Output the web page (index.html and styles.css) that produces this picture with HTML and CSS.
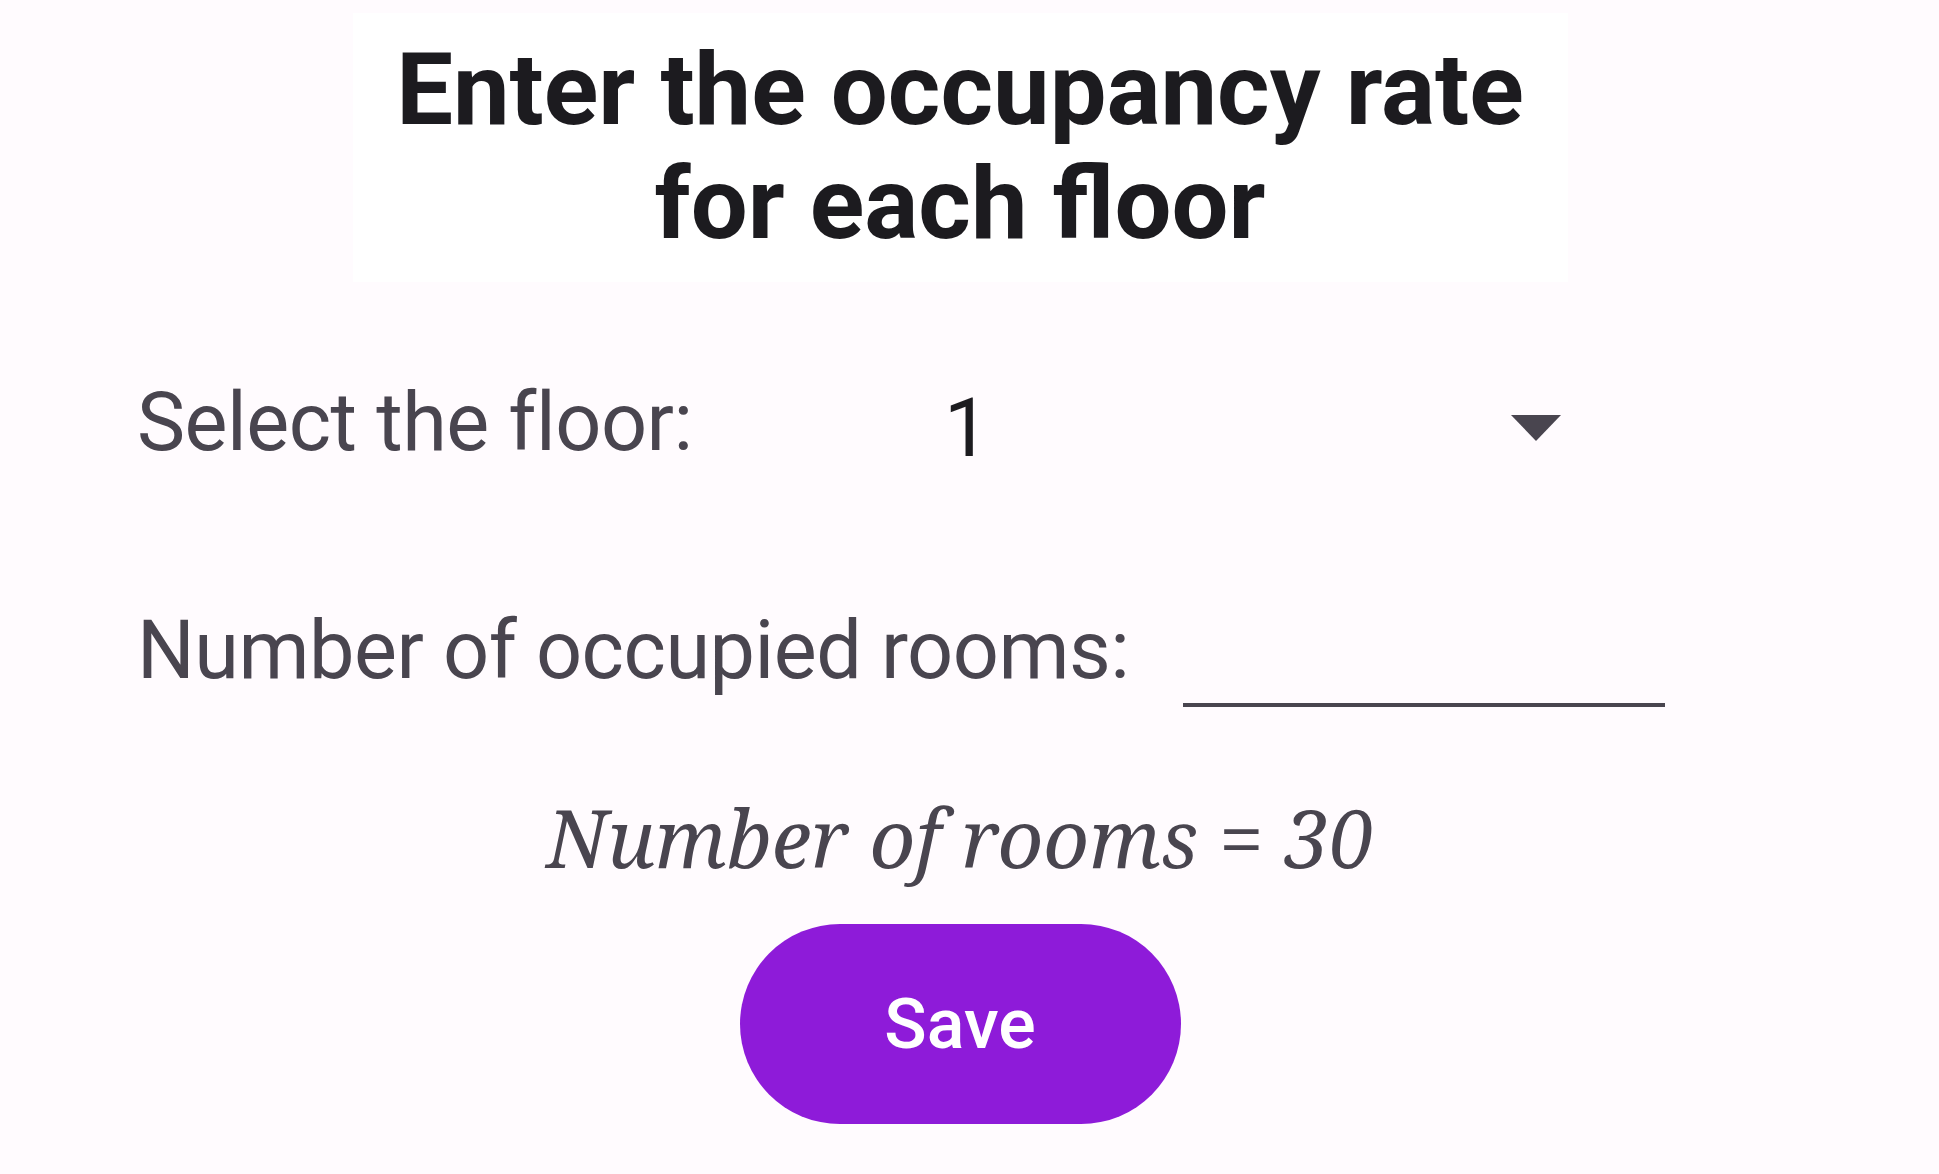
FILE: index.html
```html
<!DOCTYPE html>
<html lang="en">
<head>
<meta charset="utf-8">
<title>Occupancy rate</title>
<link rel="stylesheet" href="styles.css">
</head>
<body>
<main class="screen">
  <header class="title-card">
    <h1 class="title">Enter the occupancy rate<br>for each floor</h1>
  </header>

  <section class="form">
    <div class="row row-floor">
      <span class="label label-floor">Select the floor:</span>
      <div class="spinner">
        <span class="spinner-value">1</span>
        <svg class="spinner-arrow" width="50" height="26" viewBox="0 0 50 26" aria-hidden="true">
          <polygon points="0,0 50,0 25,26" fill="#49454f"/>
        </svg>
      </div>
    </div>

    <div class="row row-rooms">
      <span class="label label-rooms">Number of occupied rooms:</span>
      <div class="edit-field"></div>
    </div>
  </section>

  <p class="total">Number of rooms = 30</p>

  <button class="save-btn" type="button">Save</button>
</main>
</body>
</html>
```

FILE: styles.css
```css
html, body {
  margin: 0;
  padding: 0;
  background: #fffbfe;
}

body {
  font-family: Roboto, "Noto Sans", "Liberation Sans", sans-serif;
  width: 1939px;
  height: 1174px;
  overflow: hidden;
}

.screen {
  width: 1920px;
  display: flex;
  flex-direction: column;
  align-items: center;
}

.title-card {
  margin-top: 13px;
  width: 1215px;
  background: #ffffff;
  padding: 20px 0 21px;
  box-sizing: border-box;
}

.title {
  margin: 0;
  font-family: Roboto, "Liberation Sans", sans-serif;
  font-weight: 700;
  font-size: 101px;
  line-height: 114px;
  color: #1c1b1f;
  text-align: center;
}

.form {
  align-self: stretch;
  padding-left: 137px;
  display: flex;
  flex-direction: column;
}

.row {
  display: flex;
  align-items: flex-start;
  height: 96px;
}

.row-floor {
  margin-top: 93px;
}

.row-rooms {
  margin-top: 132px;
}

.label {
  font-size: 81px;
  line-height: 96px;
  letter-spacing: -0.5px;
  color: #49454f;
  white-space: nowrap;
}

.label-floor {
  width: 807px;
  flex: none;
}

.label-rooms {
  width: 1046px;
  flex: none;
}

.spinner {
  width: 617px;
  height: 96px;
  display: flex;
  align-items: flex-start;
  justify-content: space-between;
}

.spinner-value {
  font-size: 81px;
  line-height: 96px;
  color: #1c1b1f;
  margin-top: 6px;
}

.spinner-arrow {
  display: block;
  margin-top: 40px;
}

.edit-field {
  width: 482px;
  height: 100px;
  border-bottom: 4px solid #49454f;
  box-sizing: border-box;
  margin-top: 4px;
}

.total {
  margin: 90px 0 0;
  font-family: "Noto Serif", "DejaVu Serif", "Liberation Serif", serif;
  font-style: italic;
  font-size: 80px;
  line-height: 96px;
  color: #49454f;
}

.save-btn {
  margin-top: 39px;
  width: 441px;
  height: 200px;
  border: none;
  border-radius: 100px;
  background: #8e1bd9;
  color: #ffffff;
  font-family: Roboto, "Liberation Sans", sans-serif;
  font-weight: 500;
  font-size: 70px;
  padding: 0;
  cursor: pointer;
}
```
